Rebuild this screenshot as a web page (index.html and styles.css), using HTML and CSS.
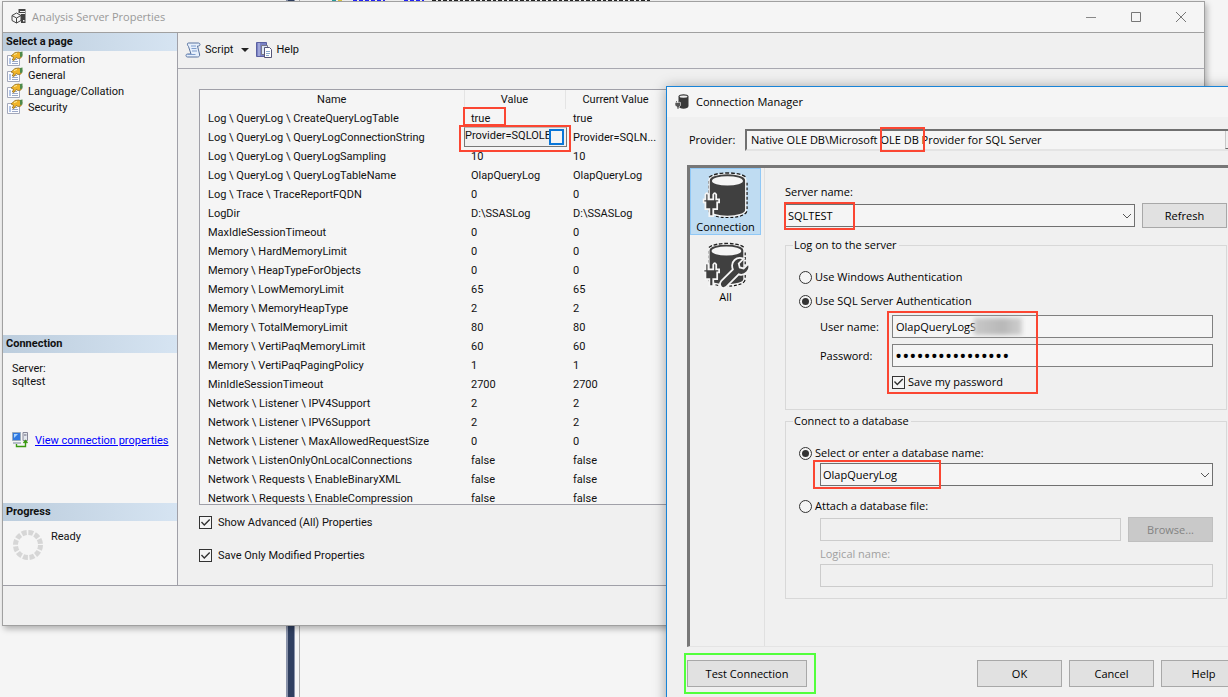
FILE: index.html
```html
<!DOCTYPE html>
<html lang="en">
<head>
<meta charset="utf-8">
<title>Analysis Server Properties</title>
<link rel="stylesheet" href="styles.css">
</head>
<body>
<svg width="0" height="0" class="defs" aria-hidden="true">
  <symbol id="page" viewBox="0 0 16 16">
    <path d="M.5 4.500h12v10H.5z" fill="#fdfdff" stroke="#a3a8ba"/>
    <path d="M2 8h2M2 10h2M2 12h2" stroke="#6b8fd0"/>
    <path d="M5 8.500h5M5 10.500h6M5 12.500h6" stroke="#9aa8c8"/>
    <path d="M4 5l4-3.500 4-.5 3 2-1 4-3 .5-2-1-2 3-1.500-.5 1-3z" fill="#f0b429" stroke="#8a6414" stroke-width=".7"/>
    <path d="M13 1l2.500-.5v5L13 6z" fill="#4d8a4a"/>
    <path d="M7 3.500l3-1" stroke="#fff0a0"/>
  </symbol>
  <symbol id="chev" viewBox="0 0 10 6"><path d="M1 1l4 4 4-4" fill="none" stroke="#555" stroke-width="1"/></symbol>
  <symbol id="db" viewBox="0 0 48 48">
    <path d="M6 9v31c0 9 38 9 38 0V9" fill="#404040" stroke="#111" stroke-width="4" stroke-dasharray="3 2"/>
    <path d="M5 8v32c0 9 39 9 39 0V8c0-9-39-9-39 0z" fill="#404040" stroke="#f5f5f5" stroke-width="1.500"/>
    <path d="M5 5C12-1 38-1 44 5" fill="none" stroke="#222" stroke-width="1.500" stroke-dasharray="4 2"/>
    <ellipse cx="24.500" cy="9" rx="16.500" ry="5" fill="#f5f5f5"/>
  </symbol>
  <symbol id="plug" viewBox="0 0 18 28">
    <path d="M3 9V4q1.500-3 3 0v5h5V4q1.500-3 3 0v5h3v3h-2v7h-4v7H7v-7H3v-7H1V9z" fill="#404040" stroke="#f5f5f5" stroke-width="1.800"/>
  </symbol>
</svg>

<div class="desktop">
  <div class="backdrop">
    <div class="pane"></div><div class="splitter"></div><div class="gutter"></div>
    <div class="editor">
      <svg class="code" width="362" height="1" viewBox="0 0 362 1" preserveAspectRatio="none" aria-hidden="true">
        <path d="M32 .5h4" stroke="#28a0a0"/><path d="M38 .5h4" stroke="#e0c840"/>
        <path d="M53 .5h32M104 .5h20" stroke="#22f" stroke-dasharray="4 2"/>
        <path d="M132 .5h218" stroke="#222" stroke-dasharray="4 2 3 2"/>
      </svg>
    </div>
  </div>

  <section class="window props" aria-label="Analysis Server Properties">
    <header class="titlebar">
      <svg class="i16" viewBox="0 0 16 16" aria-hidden="true">
        <path d="M7.500 0h7v14H10V4H7.500z" fill="#444"/><path d="M9 2.500h5M9 4.500h5" stroke="#f5f5f5"/><path d="M12 11h1.500v1.500H12z" fill="#f5f5f5"/>
        <path d="M5.500 4l4.500 2.500v5L5.500 14 1 11.500v-5z" fill="#f5f5f5" stroke="#444"/><path d="M1 6.500L5.500 9 10 6.500M5.500 9v5" fill="none" stroke="#444"/>
      </svg>
      <h1>Analysis Server Properties</h1>
      <div class="caption">
        <button aria-label="Minimize"><svg viewBox="0 0 10 10"><path d="M0 5.500h10" stroke="#888"/></svg></button>
        <button aria-label="Maximize"><svg viewBox="0 0 10 10"><path d="M.5.5h9v9h-9z" fill="none" stroke="#777"/></svg></button>
        <button aria-label="Close"><svg viewBox="0 0 10 10"><path d="M0 0l10 10M10 0L0 10" stroke="#777"/></svg></button>
      </div>
    </header>
    <div class="body">
      <aside class="side">
        <section class="grow">
          <h2>Select a page</h2>
          <nav>
            <a href="#information"><svg class="i16"><use href="#page"/></svg>Information</a>
            <a href="#general"><svg class="i16"><use href="#page"/></svg>General</a>
            <a href="#language"><svg class="i16"><use href="#page"/></svg>Language/Collation</a>
            <a href="#security"><svg class="i16"><use href="#page"/></svg>Security</a>
          </nav>
        </section>
        <section class="conn">
          <h2>Connection</h2>
          <p>Server:<br>sqltest</p>
          <a class="link" href="#connection"><svg class="i16" viewBox="0 0 16 16" aria-hidden="true">
            <path d="M.5.5h8v8h-8z" fill="#2f78e0" stroke="#9ab"/><path d="M2 2h4L2 6z" fill="#a8d4ff"/><path d="M1 10h8v2H1z" fill="#b5bcc8"/>
            <path d="M11 .5h4.500v8H11z" fill="#e4e8ee" stroke="#889"/><path d="M12 3h2.500" stroke="#667"/>
            <path d="M4.500 12v2.500h9V9M11.500 11l2-2.500 2 2.500" fill="none" stroke="#3a9a10" stroke-width="1.400"/></svg><span>View connection properties</span></a>
        </section>
        <section class="prog">
          <h2>Progress</h2>
          <div class="status"><svg width="30" height="30" viewBox="0 0 30 30" aria-hidden="true"><circle cx="15" cy="15" r="12.500" fill="none" stroke="#d6d6d6" stroke-width="5" stroke-dasharray="4.900 1.640"/></svg><span>Ready</span></div>
        </section>
      </aside>
      <main class="main">
        <div class="toolbar">
          <button><svg class="i16" viewBox="0 0 16 16" aria-hidden="true"><path d="M3.500 1h10c2 0 2 3 0 3h-1l2 8c.5 2-.5 3-2 3H2.500c-2 0-2-3 0-3H6L3.500 4.500C2 3 2 1 3.500 1z" fill="#e6effb" stroke="#5a74a0"/><path d="M6 4h5M6.500 6.500h5M7 9h5M2.500 12.500h8" stroke="#7f9dcc"/></svg>Script</button>
          <button class="drop" aria-label="Script options"><svg viewBox="0 0 8 4"><path d="M0 0h8L4 4z" fill="#222"/></svg></button>
          <button><svg class="i16" viewBox="0 0 16 16" aria-hidden="true"><path d="M.5.5h10v14H.5z" fill="#7a82c4" stroke="#5a60a0"/><path d="M3 1v13" stroke="#c5c9ee"/><path d="M5.500 3.500h6v9h-6z" fill="#dfe8f6" stroke="#778"/><path d="M8.500 5.500h5l2 2v8h-7z" fill="#fff" stroke="#557"/><path d="M10 9.500h4M10 11.500h4M10 13.500h3" stroke="#8ac"/></svg>Help</button>
        </div>
        <div class="content">
          <div class="grid">
            <table>
              <colgroup><col class="c-name"><col class="c-val"><col class="c-cur"><col></colgroup>
              <thead><tr><th>Name</th><th>Value</th><th>Current Value</th><th></th></tr></thead>
              <tbody>
                <tr><td>Log \ QueryLog \ CreateQueryLogTable</td><td>true<i class="mark m-true"></i></td><td>true</td><td></td></tr>
                <tr><td>Log \ QueryLog \ QueryLogConnectionString</td><td class="edit"><div><input value="Provider=SQLOLEDB" aria-label="QueryLogConnectionString value"><button aria-label="Edit value"></button></div><i class="mark m-prov"></i></td><td>Provider=SQLN...</td><td></td></tr>
                <tr><td>Log \ QueryLog \ QueryLogSampling</td><td>10</td><td>10</td><td></td></tr>
                <tr><td>Log \ QueryLog \ QueryLogTableName</td><td>OlapQueryLog</td><td>OlapQueryLog</td><td></td></tr>
                <tr><td>Log \ Trace \ TraceReportFQDN</td><td>0</td><td>0</td><td></td></tr>
                <tr><td>LogDir</td><td>D:\SSASLog</td><td>D:\SSASLog</td><td></td></tr>
                <tr><td>MaxIdleSessionTimeout</td><td>0</td><td>0</td><td></td></tr>
                <tr><td>Memory \ HardMemoryLimit</td><td>0</td><td>0</td><td></td></tr>
                <tr><td>Memory \ HeapTypeForObjects</td><td>0</td><td>0</td><td></td></tr>
                <tr><td>Memory \ LowMemoryLimit</td><td>65</td><td>65</td><td></td></tr>
                <tr><td>Memory \ MemoryHeapType</td><td>2</td><td>2</td><td></td></tr>
                <tr><td>Memory \ TotalMemoryLimit</td><td>80</td><td>80</td><td></td></tr>
                <tr><td>Memory \ VertiPaqMemoryLimit</td><td>60</td><td>60</td><td></td></tr>
                <tr><td>Memory \ VertiPaqPagingPolicy</td><td>1</td><td>1</td><td></td></tr>
                <tr><td>MinIdleSessionTimeout</td><td>2700</td><td>2700</td><td></td></tr>
                <tr><td>Network \ Listener \ IPV4Support</td><td>2</td><td>2</td><td></td></tr>
                <tr><td>Network \ Listener \ IPV6Support</td><td>2</td><td>2</td><td></td></tr>
                <tr><td>Network \ Listener \ MaxAllowedRequestSize</td><td>0</td><td>0</td><td></td></tr>
                <tr><td>Network \ ListenOnlyOnLocalConnections</td><td>false</td><td>false</td><td></td></tr>
                <tr><td>Network \ Requests \ EnableBinaryXML</td><td>false</td><td>false</td><td></td></tr>
                <tr><td>Network \ Requests \ EnableCompression</td><td>false</td><td>false</td><td></td></tr>
              </tbody>
            </table>
          </div>
          <label class="opt"><input type="checkbox" checked>Show Advanced (All) Properties</label>
          <label class="opt"><input type="checkbox" checked>Save Only Modified Properties</label>
        </div>
      </main>
    </div>
    <footer class="foot"></footer>
  </section>

  <section class="window dialog" aria-label="Connection Manager">
    <header class="titlebar">
      <svg class="i16" viewBox="0 0 16 16" aria-hidden="true"><path d="M3.500 2.500v9.500c0 3.500 10 3.500 10 0V2.500c0-3-10-3-10 0z" fill="#383838"/><ellipse cx="8.500" cy="2.600" rx="4" ry="1.200" fill="#eee"/><path d="M0 8.500h5.500v3L4 13v2H2v-2L0 11.500z" fill="#555" stroke="#f5f5f5" stroke-width=".6"/><path d="M1.500 7v1.500M4 7v1.500" stroke="#777"/></svg>
      <h1>Connection Manager</h1>
    </header>
    <div class="dbody">
      <div class="provider">
        <label for="prov">Provider:</label>
        <div class="sunken"><select id="prov"><option>Native OLE DB\Microsoft OLE DB Provider for SQL Server</option></select><span class="dropbtn"></span><i class="mark m-ole"></i></div>
      </div>
      <div class="panel">
        <div class="tabs">
          <button class="on"><svg width="48" height="50" viewBox="0 0 48 50" aria-hidden="true"><use href="#db" x="2" y="1" width="46" height="47"/><use href="#plug" x="0" y="20" width="18" height="28"/></svg>Connection</button>
          <button><svg width="48" height="50" viewBox="0 0 48 50" aria-hidden="true"><use href="#db" x="2" y="1" width="44" height="46"/><use href="#plug" x="0" y="20" width="18" height="28"/><path d="M19 41l12-12c-3-8 4-14 11-11l-5 5 1 4 4 1 5-5c3 7-4 13-10 11L24 47c-4 3-8-2-5-6z" fill="#404040" stroke="#f5f5f5" stroke-width="1.800"/></svg>All</button>
        </div>
        <div class="form">
          <label for="srv">Server name:</label>
          <div class="row">
            <div class="combo"><select id="srv"><option>SQLTEST</option></select><svg class="chev"><use href="#chev"/></svg><i class="mark m-srv"></i></div>
            <button class="btn">Refresh</button>
          </div>
          <fieldset class="logon">
            <legend>Log on to the server</legend>
            <label class="radio"><input type="radio" name="auth">Use Windows Authentication</label>
            <label class="radio"><input type="radio" name="auth" checked>Use SQL Server Authentication</label>
            <div class="creds">
              <label for="user">User name:</label>
              <div class="field"><input id="user" type="text" value="OlapQueryLogS"><span class="smudge"></span></div>
              <label for="pw">Password:</label>
              <div class="field"><input id="pw" type="password" value="0123456789abcdef"></div>
              <label class="save"><input type="checkbox" checked>Save my password</label>
              <i class="mark m-cred"></i>
            </div>
          </fieldset>
          <fieldset class="database">
            <legend>Connect to a database</legend>
            <label class="radio"><input type="radio" name="db" checked>Select or enter a database name:</label>
            <div class="combo sub"><select aria-label="Database name"><option>OlapQueryLog</option></select><svg class="chev"><use href="#chev"/></svg><i class="mark m-db"></i></div>
            <label class="radio attach"><input type="radio" name="db">Attach a database file:</label>
            <div class="row sub"><input type="text" disabled aria-label="Database file"><button class="btn" disabled>Browse...</button></div>
            <label class="logical sub" for="logical">Logical name:</label>
            <div class="row sub"><input id="logical" type="text" disabled></div>
          </fieldset>
        </div>
      </div>
      <div class="actions">
        <div class="test"><button class="btn">Test Connection</button><i class="mark m-test"></i></div>
        <button class="btn">OK</button><button class="btn">Cancel</button><button class="btn">Help</button>
      </div>
    </div>
  </section>
</div>
</body>
</html>
```
FILE: styles.css
```css
*{box-sizing:border-box}
html,body{margin:0;height:100%}
body{font-family:Roboto,"Liberation Sans",sans-serif;font-size:11px;line-height:13px;color:#111;background:#f5f5f5}
button,input,select{font:inherit;color:inherit;margin:0;padding:0;border:0;border-radius:0;background:none;outline:0}
h1,h2,p,fieldset,legend{margin:0;padding:0;font-size:inherit;font-weight:400}
a{color:inherit;text-decoration:none}
.defs{position:absolute}
.i16{width:16px;height:16px;flex:none}

.desktop{position:relative;height:100vh;overflow:hidden}
.backdrop{display:flex;height:100%}
.pane{width:286px}
.splitter{width:9px;background:#2f3f60;border:1px solid #8a93aa;border-width:0 1px 0 2px}
.gutter{width:5px;border-right:1px solid #b0b0b0}
.editor{flex:1}
.code{display:block}

.window{position:absolute;display:flex;flex-direction:column}
.props{left:2px;right:23px;top:1px;bottom:71px;background:#f0f0f0;border:1px solid #a0a0a0;box-shadow:2px 3px 6px rgba(0,0,0,.28)}
.titlebar{display:flex;align-items:center;flex:none;height:31px;background:#f5f5f5;font:11px/16px "Open Sans","Noto Sans",sans-serif}
.titlebar h1{flex:1}
.props .titlebar{border-bottom:1px solid #a0a0a0;padding-left:8px;gap:5px;color:#999}
.caption{display:flex;padding-right:1px}
.caption button{width:45px;height:29px;display:flex;align-items:center;justify-content:center}
.caption svg{width:10px;height:10px}
.body{flex:1;display:flex;min-height:0}
.side{width:175px;flex:none;display:flex;flex-direction:column;background:#f5f5f5;border-right:1px solid #a0a0a8}
.side h2{height:18px;padding:0 3px;line-height:18px;font-weight:700;background:linear-gradient(90deg,#bccddd,#d6e4f2)}
.grow{flex:1}
.side nav a{display:flex;align-items:center;gap:5px;height:16px;padding-left:4px}
.conn{height:168px}
.conn p{padding:9px 9px 0}
.link{display:flex;align-items:center;gap:7px;margin-top:44px;padding-left:9px;color:#00f}
.link span{text-decoration:underline}
.prog{height:82px}
.status{display:flex;gap:8px;padding:9px 10px}
.main{flex:1;min-width:0;display:flex;flex-direction:column}
.toolbar{display:flex;align-items:center;height:36px;flex:none;padding:0 7px 2px;border-bottom:1px solid #a8a8b0}
.toolbar button{display:flex;align-items:center;gap:4px}
.toolbar .drop{padding:0 7px 0 8px}
.drop svg{width:8px;height:4px}
.content{flex:1;min-height:0;padding:20px 21px 0 21px;display:flex;flex-direction:column}
.grid{height:416px;flex:none;background:#f5f5f5;border:1px solid #a0a0a8;overflow:hidden}
table{width:100%;table-layout:fixed;border-collapse:collapse}
.c-name{width:264px}
.c-val,.c-cur{width:101px}
th,td{height:19px;padding:0 0 0 8px;text-align:left;font-weight:400;white-space:nowrap}
th{text-align:center;padding:0;border-right:1px solid #e4e4e4}
td:nth-child(2){padding-left:7px;position:relative}
.edit div{display:flex;position:absolute;left:0;top:-1px;width:103px;height:20px;border:1px solid #777;border-top-color:#bbb;background:#f0f0f0}
.edit input{width:84px;height:14px}
.edit button{width:15px;height:16px;margin-top:1px;border:2px solid #0a76d8;background:#f5f5f5}
.mark{position:absolute;border:2px solid #fb4632;pointer-events:none}
.m-true{left:-1px;top:-2px;width:43px;height:19px}
.m-prov{left:-5px;top:-3px;width:112px;height:27px}
.opt{display:flex;align-items:center;gap:6px;margin-top:11px}
.opt + .opt{margin-top:20px}
input[type=checkbox],input[type=radio]{appearance:none;flex:none;width:13px;height:13px;border:1px solid #333;background:#f5f5f5}
input[type=checkbox]:checked::before{content:"";display:block;width:11px;height:11px;background:#333;clip-path:polygon(9% 50%,18% 42%,39% 64%,84% 18%,93% 27%,39% 82%)}
input[type=radio]{border-radius:50%}
input[type=radio]:checked::before{content:"";display:block;width:7px;height:7px;margin:2px;border-radius:50%;background:#333}
.foot{height:40px;flex:none;border-top:1px solid #a0a0a8}

.dialog{left:666px;right:-38px;top:86px;bottom:-20px;background:#f0f0f0;border:1px solid #1883d7;box-shadow:0 1px 12px rgba(0,0,0,.35);font:11px/16px "Open Sans","Noto Sans",sans-serif;color:#000}
.dialog .titlebar{height:30px;padding-left:8px;gap:5px}
.dbody{flex:1;display:flex;flex-direction:column;padding:12px 19px 29px 20px}
.provider{display:flex;align-items:center;padding-left:2px}
.provider label{width:56px;line-height:20px}
.sunken{position:relative;flex:1;height:22px;border:2px solid #e4e4e4;border-top-color:#707070;border-left-color:#707070;border-right:0;background:#f5f5f5}
.sunken select{appearance:none;width:100%;height:18px;padding-left:4px}
.dropbtn{position:absolute;left:478px;right:0;top:0;bottom:0;border-left:1px solid #c8c8c8;border-bottom:1px solid #666;background:#f0f0f0}
.m-ole{left:133px;top:-4px;width:45px;height:25px}
.panel{flex:1;display:flex;margin-top:14px;border:solid #e4e4e4;border-width:3px 0 1px 3px;border-top-color:#777;border-left-color:#777}
.tabs{width:75px;flex:none;display:flex;flex-direction:column;border-right:1px solid #e0e0e0}
.tabs button{display:flex;flex-direction:column;align-items:center;width:71px;height:67px;line-height:14px;padding-top:2px;border:1px solid transparent}
.tabs button + button{margin-top:3px}
.tabs .on{background:#bfdcf2;border-color:#90c8f6}
.form{flex:1;padding:16px 19px 0 20px}
.form > label{display:block}
.row{display:flex;gap:7px;align-items:center}
.row .combo{flex:1}
.combo{position:relative;display:flex}
.combo select{appearance:none;flex:1;height:23px;padding-left:2px;border:1px solid #707070;background:#f5f5f5}
.form > .row{margin-top:3px}
.chev{position:absolute;right:3px;top:9px;width:10px;height:6px;pointer-events:none}
.btn{width:85px;height:27px;border:1px solid #a8a8a8;background:#e1e1e1}
.row .btn{height:25px}
.m-srv{left:-1px;top:-2px;width:71px;height:28px}
fieldset{min-width:0;border:1px solid #d8d8d8}
.logon{height:173px;margin-top:9px;padding:0 13px}
legend{margin-left:-6px;padding:0 2px 0 1px;line-height:16px}
.radio{display:flex;align-items:center;gap:3px;height:24px}
.logon .radio:first-of-type{margin-top:12px}
.creds{position:relative;display:grid;grid-template-columns:72px 1fr;row-gap:6px;align-items:center;margin-left:21px;padding-top:2px}
.field{position:relative;display:flex}
.creds .field input,.row input{flex:1;min-width:0;height:23px;padding-left:3px;border:1px solid #808080;background:#f5f5f5}
.creds .field input[type=password]{font-size:19px;padding-left:2px}
.save{grid-column:2;display:flex;align-items:center;gap:3px;margin-top:1px}
.smudge{position:absolute;left:82px;top:3px;width:48px;height:17px;background:linear-gradient(90deg,#c8c8c8,#b8b8b8 60%,#cfcfcf);filter:blur(2px)}
.m-cred{left:67px;top:-2px;width:151px;height:83px}
.database{height:186px;margin-top:3px;padding:0 13px}
.database .radio{height:20px}
.database .radio:first-of-type{margin-top:14px}
.sub{margin-left:21px}
.m-db{left:-7px;top:-3px;width:128px;height:29px}
.database .attach{margin-top:9px;height:22px}
.row input:disabled{border-color:#ccc;background:#f0f0f0}
.btn:disabled{background:#c9c9c9;border-color:#bfbfbf;color:#838383}
.logical{display:block;color:#a0a0a0;margin-top:4px;margin-bottom:2px}
.actions{display:flex;gap:7px;margin-top:13px}
.test{position:relative;margin-right:auto}
.test .btn{width:120px}
.m-test{left:-3px;top:-7px;width:132px;height:41px;border-color:#52ff3c}
```
